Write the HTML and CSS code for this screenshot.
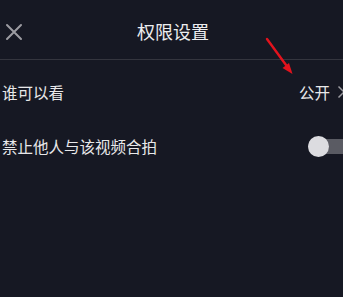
FILE: index.html
```html
<!DOCTYPE html>
<html lang="zh">
<head>
<meta charset="utf-8">
<title>权限设置</title>
<link rel="stylesheet" href="styles.css">
</head>
<body>
<div class="page">
  <header class="topbar">
    <svg class="close" width="18" height="18" viewBox="0 0 18 18"><path d="M2 2 L16 16 M16 2 L2 16" stroke="#9c9ca2" stroke-width="2" stroke-linecap="round" fill="none"/></svg>
    <h1 class="title">权限设置</h1>
  </header>
  <div class="row row-first">
    <span class="label">谁可以看</span>
    <span class="value">公开<svg class="chev" width="9" height="14" viewBox="0 0 9 14"><path d="M1.5 1.5 L7 7 L1.5 12.5" stroke="#9c9ca2" stroke-width="1.5" fill="none"/></svg></span>
  </div>
  <div class="row row-second">
    <span class="label">禁止他人与该视频合拍</span>
    <span class="toggle"><span class="knob"></span></span>
  </div>
  <svg class="arrow" width="40" height="44" viewBox="0 0 40 44"><path d="M3 2 L22 28" stroke="#e3131d" stroke-width="2.4" stroke-linecap="round" fill="none"/><path d="M28.5 37 L18.5 31 L25 26 Z" fill="#e3131d"/></svg>
</div>
</body>
</html>
```

FILE: styles.css
```css
html, body {
  margin: 0;
  padding: 0;
  background: #161823;
  overflow: hidden;
}
.page {
  position: relative;
  width: 343px;
  height: 297px;
  font-family: "Noto Sans CJK SC", "Noto Sans", sans-serif;
  color: #e8e8ea;
}
.topbar {
  position: relative;
  height: 59px;
  border-bottom: 1px solid #34353e;
  display: flex;
  align-items: center;
  justify-content: center;
}
.close {
  position: absolute;
  left: 5px;
  top: 23px;
}
.title {
  margin: 2px 0 0;
  font-size: 18px;
  font-weight: 400;
  color: #ededef;
  padding-left: 3px;
  line-height: 1;
}
.row {
  display: flex;
  align-items: center;
  justify-content: space-between;
  padding-left: 2px;
  font-size: 15.5px;
}
.row-first {
  height: 63px;
}
.row-second {
  height: 46px;
}
.label {
  color: #e8e8ea;
}
.value {
  display: flex;
  align-items: center;
  color: #e8e8ea;
  margin-right: -3px;
}
.chev {
  margin-left: 7px;
}
.toggle {
  position: relative;
  width: 52px;
  height: 15px;
  background: #5a5b63;
  border-radius: 8px;
  margin-right: -17px;
}
.knob {
  position: absolute;
  left: 0;
  top: -3px;
  width: 21px;
  height: 21px;
  border-radius: 50%;
  background: #dcdce0;
}
.arrow {
  position: absolute;
  left: 264px;
  top: 37px;
}
```
